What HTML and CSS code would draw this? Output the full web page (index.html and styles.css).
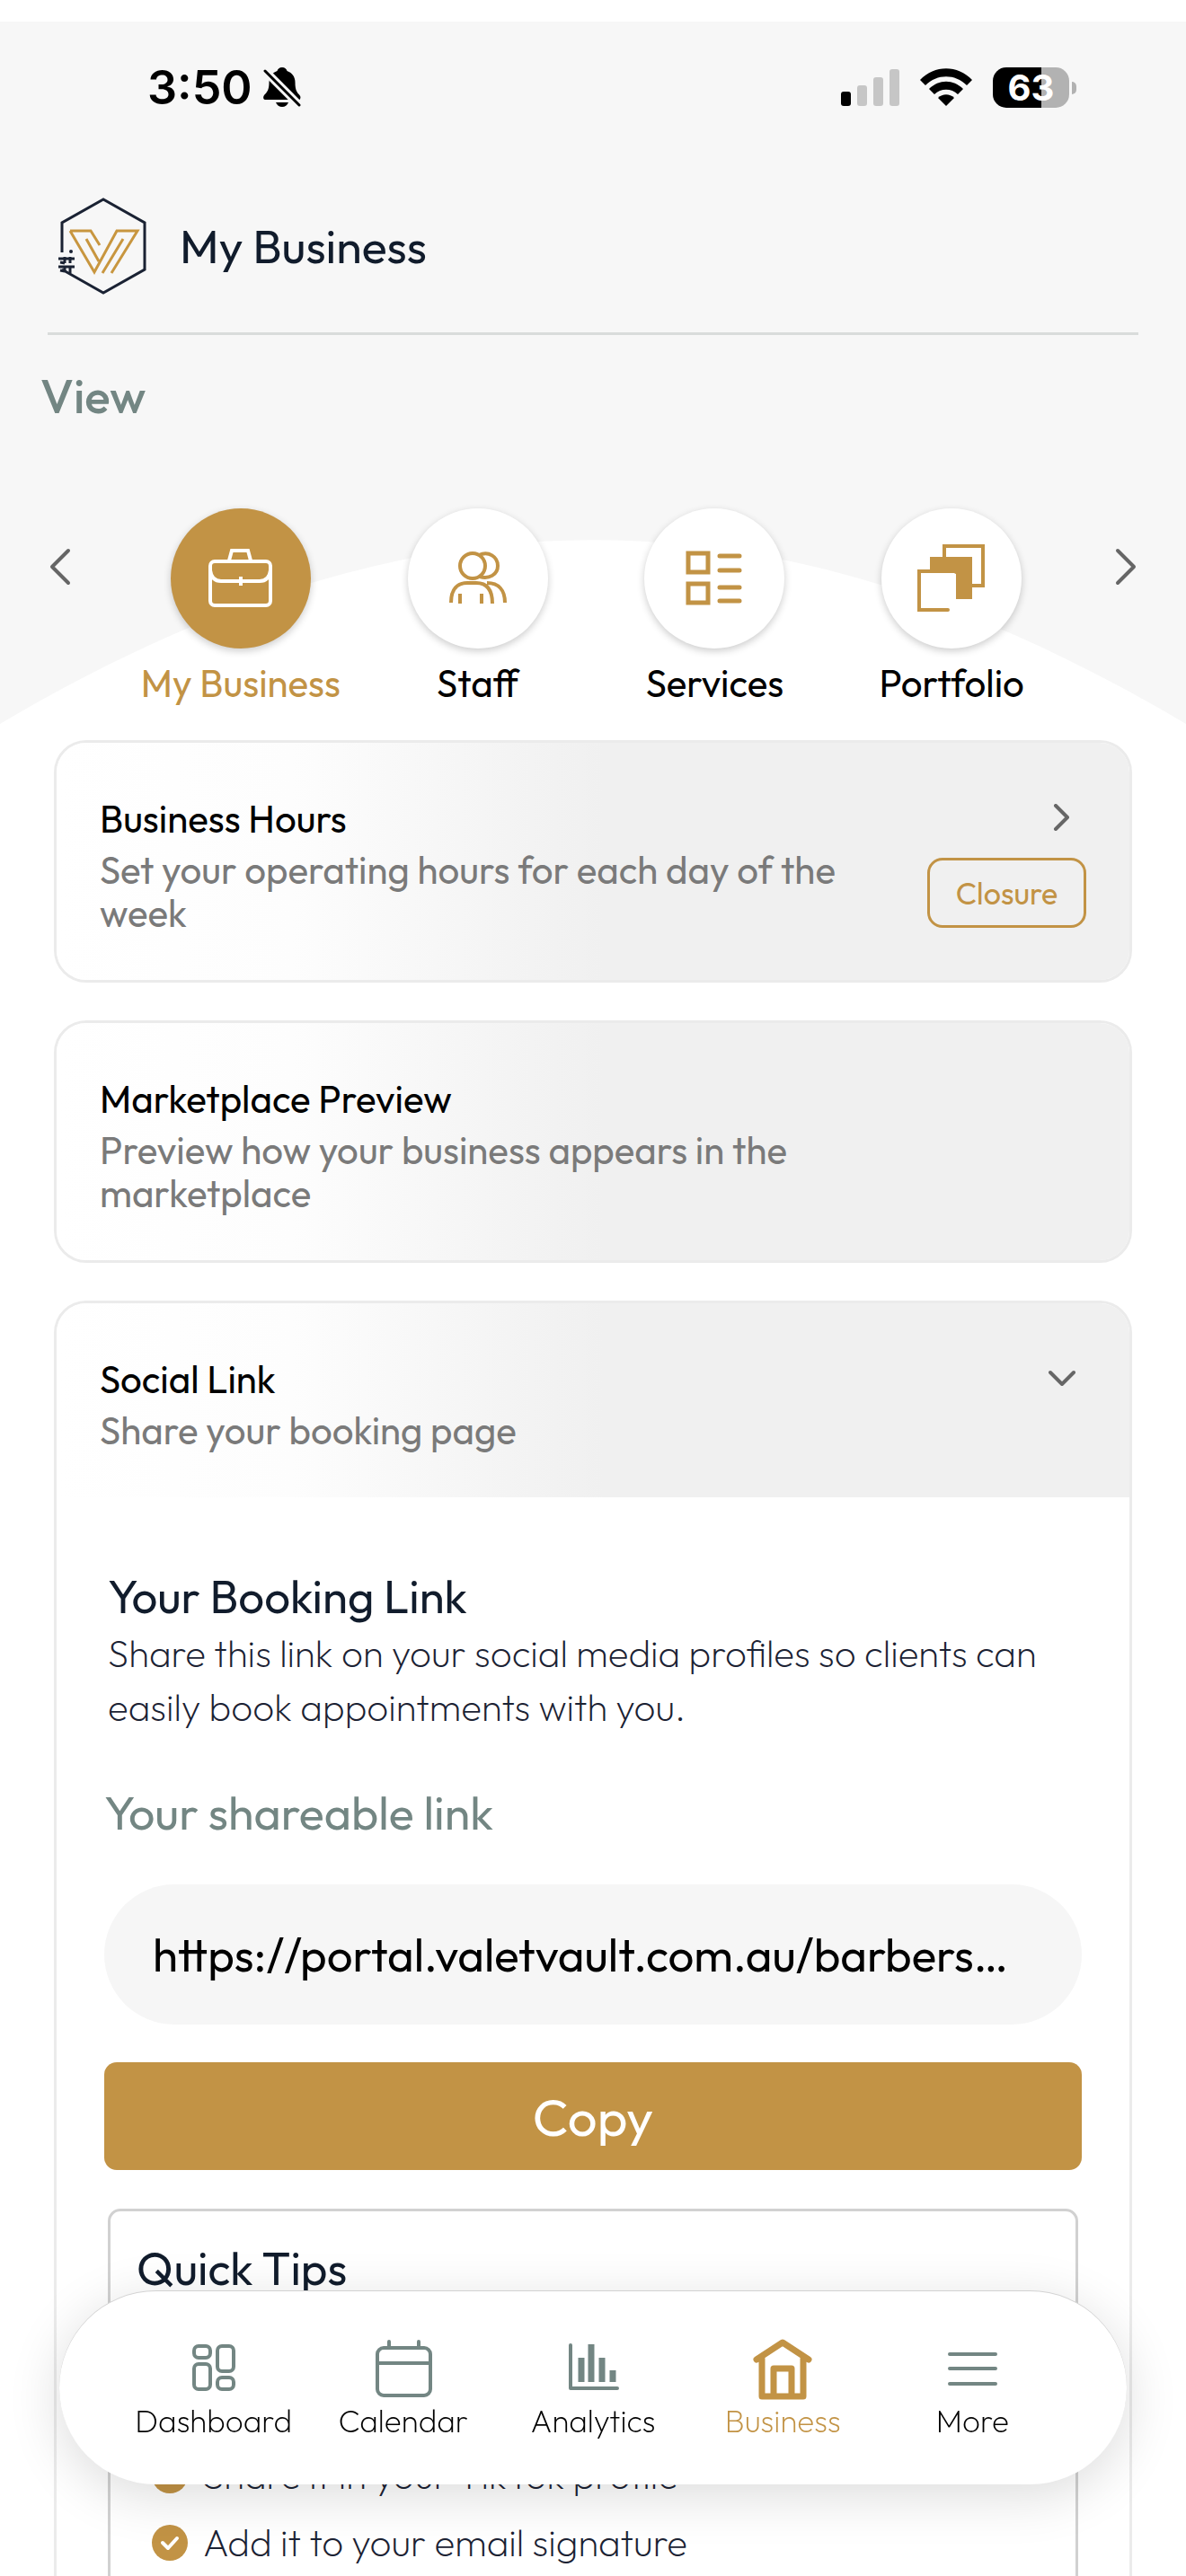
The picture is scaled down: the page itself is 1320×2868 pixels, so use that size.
FILE: index.html
```html
<!DOCTYPE html>
<html lang="en">
<head>
  <meta charset="UTF-8">
  <title>My Business</title>
  <meta name="viewport" content="width=device-width, initial-scale=1.0">
  <link rel="stylesheet" href="styles.css">
</head>
<body>
  <main class="screen">
    <section class="hero">
      <!-- white curve behind the view switcher -->
      <svg class="hero-curve" viewBox="0 0 1320 205" preserveAspectRatio="none" aria-hidden="true">
        <path d="M0 205C460 -68 860 -68 1320 205Z" fill="#fff"/>
      </svg>

      <div class="status-bar">
        <div class="status-time">
          <span>3:50</span>
          <svg width="42" height="44" viewBox="0 0 42 44" aria-hidden="true">
            <path d="M21 0c3 0 5 2 5.500 4 6 2 9 7 9 13 0 8 2 11 5 14 1.500 2 1 4 0 5H2c-2 0-2.500-3-1-5 3-3 5.500-6 5.500-14 0-6 3-11 9-13C16 2 18 0 21 0z"/>
            <path d="M14 39h14c-1 3-4 5-7 5s-6-2-7-5z"/>
            <path d="M2 4l38 38" stroke="#f7f7f7" stroke-width="9"/>
            <path d="M2 4l38 38" stroke="#000" stroke-width="3" stroke-linecap="round"/>
          </svg>
        </div>
        <div class="status-icons">
          <svg width="65" height="41" viewBox="0 0 65 41" aria-hidden="true">
            <rect x="0" y="25" width="11" height="16" rx="3"/>
            <rect x="18" y="18" width="11" height="23" rx="3" fill="#c6c6c6"/>
            <rect x="36" y="9" width="11" height="32" rx="3" fill="#c6c6c6"/>
            <rect x="54" y="0" width="11" height="41" rx="3" fill="#c6c6c6"/>
          </svg>
          <svg width="58" height="42" viewBox="0 0 58 42" aria-hidden="true">
            <path d="M0 13C16 -4 42 -4 58 13L52 19C39 6 19 6 6 19z"/>
            <path d="M10 23C21 12 37 12 48 23L42 29C35 22 23 22 16 29z"/>
            <path d="M20 33C25 28 33 28 38 33L29 42z"/>
          </svg>
          <div class="battery"><span>63</span></div>
        </div>
      </div>

      <header class="app-header">
        <svg class="logo" viewBox="0 0 98 108" fill="none" aria-hidden="true">
          <path d="M4 61V28L50 2L96 28V80L50 106L4 80" stroke="#1a2233" stroke-width="3"/>
          <path d="M13 37H36L46 53M13 37L40 83L65 37H88L59 84M31 46L45 71M72 46L49 84" stroke="#c8963f" stroke-width="3"/>
          <path d="M0 68h18M0 77h18M7 66v7M13 66v7M7 76v7M13 76v8M2 72l5 1M2 81l5 1" stroke="#1a2233" stroke-width="3"/>
          <circle cx="14" cy="60" r="2" fill="#1a2233"/>
        </svg>
        <h1>My Business</h1>
      </header>

      <h2 class="view-label">View</h2>

      <div class="switcher">
        <button class="arrow" aria-label="Previous">
          <svg width="24" height="42" viewBox="0 0 24 42"><path d="M21 3L3 21L21 39"/></svg>
        </button>
        <nav class="views" aria-label="View">
          <a href="#business" class="view active">
            <span class="view-icon">
              <svg width="72" height="66" viewBox="0 0 72 66">
                <rect x="2" y="14" width="67" height="49" rx="5"/>
                <path d="M23 13L26 2H44L47 13M2 24C3 32 7 36 14 36H57C64 36 68 32 69 24M36 31V41"/>
              </svg>
            </span>
            My Business
          </a>
          <a href="#staff" class="view">
            <span class="view-icon">
              <svg width="64" height="60" viewBox="0 0 64 60">
                <circle cx="26" cy="16" r="14"/>
                <path d="M33 4C44 -1 54 6 54 16S44 31 34 28M2 57C2 42 9 35 20 35H30C41 35 48 42 48 58M42 35C55 35 62 43 62 57M12 47V58M36 47V58"/>
              </svg>
            </span>
            Staff
          </a>
          <a href="#services" class="view">
            <span class="view-icon">
              <svg width="64" height="62" viewBox="0 0 64 62">
                <path d="M3 3H25V24H3ZM3 37H25V58H3Z" stroke-width="5"/>
                <path d="M38 6H60M38 22H60M38 41H60M38 56H60" stroke-width="5" stroke-linecap="round"/>
              </svg>
            </span>
            Services
          </a>
          <a href="#portfolio" class="view">
            <span class="view-icon">
              <svg width="76" height="76" viewBox="0 0 76 76">
                <path d="M30 14V2H73V46H61"/>
                <path d="M14 14H61V61H43V30H14Z" fill="#c29345" stroke="none"/>
                <path d="M43 31V30H2V73H34" stroke-linecap="round"/>
              </svg>
            </span>
            Portfolio
          </a>
        </nav>
        <button class="arrow" aria-label="Next">
          <svg width="24" height="42" viewBox="0 0 24 42"><path d="M3 3L21 21L3 39"/></svg>
        </button>
      </div>
    </section>

    <section class="cards">
      <article class="card">
        <div class="card-head">
          <div class="card-text">
            <h3>Business Hours</h3>
            <p>Set your operating hours for each day of the week</p>
          </div>
          <div class="card-actions">
            <button class="chevron" aria-label="Open business hours">
              <svg width="30" height="30" viewBox="0 0 30 30"><path d="M8 2L21 15L8 28"/></svg>
            </button>
            <button class="closure">Closure</button>
          </div>
        </div>
      </article>

      <article class="card">
        <div class="card-head">
          <div class="card-text">
            <h3>Marketplace Preview</h3>
            <p>Preview how your business appears in the marketplace</p>
          </div>
        </div>
      </article>

      <article class="card">
        <div class="card-head">
          <div class="card-text">
            <h3>Social Link</h3>
            <p>Share your booking page</p>
          </div>
          <div class="card-actions">
            <button class="chevron" aria-label="Collapse social link">
              <svg width="30" height="30" viewBox="0 0 30 30"><path d="M2 9L15 22L28 9"/></svg>
            </button>
          </div>
        </div>
        <div class="card-body">
          <h4>Your Booking Link</h4>
          <p class="intro">Share this link on your social media profiles so clients can easily book appointments with you.</p>
          <label class="link-label" for="share-link">Your shareable link</label>
          <input class="link-input" id="share-link" type="text" value="https://portal.valetvault.com.au/barbers…" readonly>
          <button class="copy">Copy</button>
          <div class="tips">
            <h4>Quick Tips</h4>
            <ul>
              <li>
                <svg width="40" height="40" viewBox="0 0 40 40"><circle cx="20" cy="20" r="20"/><path d="M12 20L18 26L28 15"/></svg>
                Share it in your TikTok profile
              </li>
              <li>
                <svg width="40" height="40" viewBox="0 0 40 40"><circle cx="20" cy="20" r="20"/><path d="M12 20L18 26L28 15"/></svg>
                Add it to your email signature
              </li>
            </ul>
          </div>
        </div>
      </article>
    </section>
  </main>

  <nav class="tab-bar" aria-label="Main">
    <a href="#dashboard" class="tab">
      <svg width="68" height="68" viewBox="0 0 68 68">
        <rect x="12" y="8" width="18" height="13" rx="5"/>
        <rect x="38" y="8" width="18" height="28" rx="5"/>
        <rect x="12" y="28" width="18" height="28" rx="5"/>
        <rect x="38" y="43" width="18" height="13" rx="5"/>
      </svg>
      Dashboard
    </a>
    <a href="#calendar" class="tab">
      <svg width="68" height="68" viewBox="0 0 68 68">
        <rect x="5" y="10" width="59" height="53" rx="7"/>
        <path d="M5 27H64M18 3V10M51 3V10"/>
      </svg>
      Calendar
    </a>
    <a href="#analytics" class="tab">
      <svg width="68" height="68" viewBox="0 0 68 68">
        <path d="M9 7V55H61"/>
        <path d="M21 21V48M32 6V48M44 21V48M56 35V48" stroke-width="7" stroke-linecap="butt"/>
      </svg>
      Analytics
    </a>
    <a href="#business" class="tab active">
      <svg width="68" height="68" viewBox="0 0 68 68">
        <path d="M5 23L34 4L63 23M11 22V64H57V22M24 64V33H44V64" stroke-width="7"/>
      </svg>
      Business
    </a>
    <a href="#more" class="tab">
      <svg width="68" height="68" viewBox="0 0 68 68">
        <path d="M9 17H60M9 33H60M9 50H60"/>
      </svg>
      More
    </a>
  </nav>
</body>
</html>
```
FILE: styles.css
```css
* {
  box-sizing: border-box;
}
html, body {
  height: 100%;
  margin: 0;
  padding: 0;
}
body {
  background: #fff;
  color: #000;
  font-family: Outfit, Lato, 'Open Sans', sans-serif;
  overflow: hidden;
}
h1, h2, h3, h4, p, ul {
  margin: 0;
  padding: 0;
  font-weight: 400;
}
a {
  color: inherit;
  text-decoration: none;
}
button {
  border: 0;
  padding: 0;
  background: none;
  font-family: inherit;
  cursor: pointer;
}
svg {
  display: block;
  flex-shrink: 0;
}
.screen {
  height: 100%;
  padding-top: 24px;
  overflow-y: auto;
  scrollbar-width: none;
}

/* Header */
.hero {
  position: relative;
  background: #f7f7f7;
  padding-bottom: 20px;
}
.hero-curve {
  position: absolute;
  left: 0;
  bottom: 0;
  width: 100%;
  height: 205px;
}
.status-bar {
  display: flex;
  justify-content: space-between;
  align-items: center;
  height: 146px;
  padding: 0 122px 0 164px;
  font-family: Inter, sans-serif;
}
.status-time {
  display: flex;
  align-items: center;
  gap: 12px;
  font-size: 52px;
  font-weight: 600;
}
.status-icons {
  display: flex;
  align-items: center;
  gap: 23px;
}
.battery {
  position: relative;
  width: 85px;
  height: 45px;
  margin-right: 8px;
  border-radius: 15px;
  background: linear-gradient(90deg, #000 64%, #b2b2b2 64%);
  color: #fff;
  font-size: 40px;
  font-weight: 700;
  line-height: 45px;
  text-align: center;
}
.battery::after {
  content: "";
  position: absolute;
  right: -8px;
  top: 16px;
  width: 5px;
  height: 14px;
  border-radius: 0 5px 5px 0;
  background: #b2b2b2;
}
.app-header {
  display: flex;
  align-items: center;
  gap: 37px;
  height: 203px;
  margin: 0 53px;
  padding: 7px 0 0 12px;
  border-bottom: 3px solid #d9dcdb;
}
.logo {
  width: 98px;
  height: 108px;
}
.app-header h1 {
  color: #111c2c;
  font-size: 52px;
  line-height: 64px;
}
.view-label {
  padding: 36px 45px 0;
  color: #738683;
  font-size: 53px;
  font-weight: 500;
  line-height: 64px;
}
.switcher {
  position: relative;
  display: flex;
  justify-content: space-between;
  align-items: flex-start;
  padding: 93px 55px 0;
}
.arrow {
  margin-top: 44px;
}
.arrow path, .chevron path {
  fill: none;
  stroke: #666;
  stroke-width: 4;
  stroke-linecap: round;
  stroke-linejoin: round;
}
.views {
  display: grid;
  grid-template-columns: repeat(4, 1fr);
  flex: 1;
  margin: 0 50px 0 57px;
}
.view {
  display: flex;
  flex-direction: column;
  align-items: center;
  gap: 14px;
  font-size: 42px;
  line-height: 50px;
  white-space: nowrap;
}
.view-icon {
  display: flex;
  align-items: center;
  justify-content: center;
  width: 156px;
  height: 156px;
  border-radius: 50%;
  background: #fff;
  box-shadow: 0 3px 8px #0003;
}
.view-icon svg {
  fill: none;
  stroke: #c29345;
  stroke-width: 4;
}
.view.active {
  color: #c29345;
}
.view.active .view-icon {
  background: #c29345;
}
.view.active svg {
  stroke: #fff;
}

/* Cards */
.cards {
  display: flex;
  flex-direction: column;
  gap: 42px;
  padding: 18px 60px 120px;
}
.card {
  border: 3px solid #ebebeb;
  border-radius: 36px;
  overflow: hidden;
}
.card-head {
  display: flex;
  justify-content: space-between;
  padding: 60px 48px 50px;
  background: linear-gradient(90deg, #fff 0%, #fdfdfd 22%, #f0f0f0 51%);
}
.card-text {
  flex: 1;
  max-width: 850px;
}
.card-text h3 {
  font-size: 42px;
  line-height: 50px;
}
.card-text p {
  margin-top: 8px;
  color: #7a7a7a;
  font-size: 42px;
  line-height: 48px;
}
.card-actions {
  display: flex;
  flex-direction: column;
  align-items: flex-end;
  gap: 30px;
  padding-top: 8px;
}
.chevron {
  margin-right: 12px;
}
.closure {
  width: 177px;
  height: 78px;
  border: 3px solid #c29345;
  border-radius: 17px;
  color: #c29345;
  font-size: 34px;
}
.card-body {
  padding: 78px 53px 0;
}
.card-body h4 {
  color: #111c2c;
  font-size: 51px;
  line-height: 64px;
}
.card-body > h4, .intro {
  padding: 0 4px;
}
.intro {
  margin-top: 2px;
  color: #1b2233;
  font-size: 42px;
  font-weight: 200;
  line-height: 60px;
}
.link-label {
  display: block;
  margin-top: 55px;
  color: #738683;
  font-size: 52px;
  line-height: 64px;
}
.link-input {
  display: block;
  width: 100%;
  height: 156px;
  margin-top: 48px;
  padding: 0 54px;
  border: 0;
  border-radius: 78px;
  background: #f6f6f6;
  color: #000;
  font-family: inherit;
  font-size: 51px;
}
.copy {
  display: block;
  width: 100%;
  height: 120px;
  margin-top: 42px;
  border-radius: 14px;
  background: #c29345;
  color: #fff;
  font-size: 58px;
}
.tips {
  margin: 43px 4px 40px;
  padding: 31px 29px;
  border: 3px solid #d1d1d1;
  border-radius: 14px;
}
.tips ul {
  display: grid;
  gap: 25px;
  margin-top: 174px;
  padding-left: 17px;
  list-style: none;
}
.tips li {
  display: flex;
  align-items: center;
  gap: 17px;
  color: #1b2233;
  font-size: 42px;
  font-weight: 200;
  line-height: 50px;
}
.tips circle {
  fill: #c29345;
}
.tips path {
  fill: none;
  stroke: #fff;
  stroke-width: 4;
  stroke-linecap: round;
  stroke-linejoin: round;
}

/* Bottom navigation */
.tab-bar {
  position: fixed;
  left: 66px;
  right: 66px;
  bottom: 102px;
  display: grid;
  grid-template-columns: repeat(5, 1fr);
  height: 215px;
  padding: 53px 66px 0;
  border-radius: 108px;
  background: #fff;
  box-shadow: 0 12px 60px #00000024, 0 -1px 0 #dcdcdc;
}
.tab {
  display: flex;
  flex-direction: column;
  align-items: center;
  gap: 2px;
  font-size: 35px;
  font-weight: 200;
  line-height: 42px;
}
.tab svg {
  fill: none;
  stroke: #738683;
  stroke-width: 4;
  stroke-linecap: round;
  stroke-linejoin: round;
}
.tab.active {
  color: #c29345;
}
.tab.active svg {
  stroke: #c29345;
}
```
